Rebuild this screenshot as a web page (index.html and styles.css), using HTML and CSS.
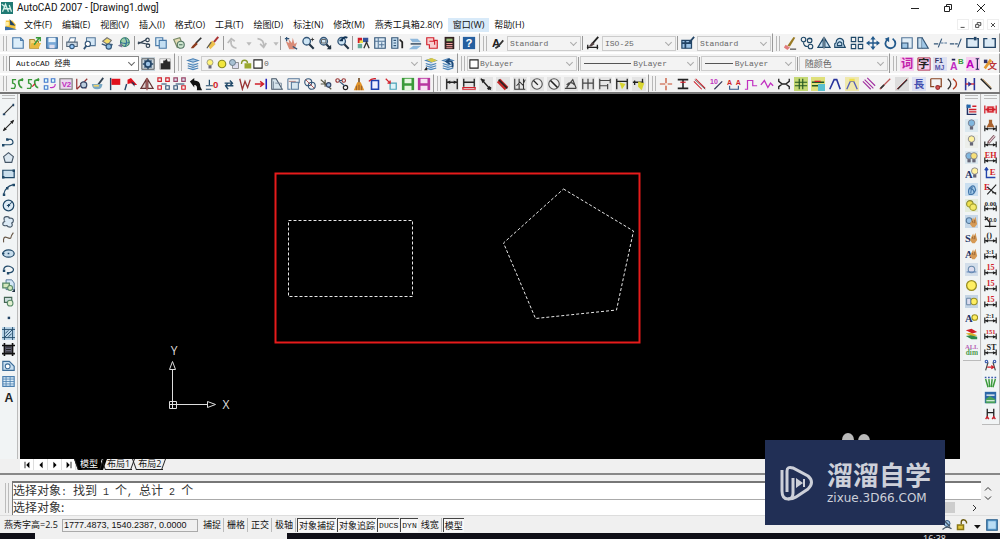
FILE: index.html
```html
<!DOCTYPE html>
<html lang="zh-CN">
<head>
<meta charset="utf-8">
<meta name="viewport" content="width=device-width, initial-scale=1">
<title>AutoCAD 2007 - [Drawing1.dwg]</title>
<link rel="stylesheet" href="styles.css">
</head>
<body>
<div class="app">
  <header class="titlebar">
    <span class="app-icon" data-icon="app"></span>
    <h1 class="title">AutoCAD 2007 - [Drawing1.dwg]</h1>
    <div class="window-buttons">
      <button type="button" aria-label="最小化"><svg viewBox="0 0 10 10"><path d="M1 5.500h8"/></svg></button>
      <button type="button" aria-label="还原"><svg viewBox="0 0 10 10"><path d="M1.500 3.500h5v5h-5zM3.500 3.500v-2h5v5h-2"/></svg></button>
      <button type="button" aria-label="关闭"><svg viewBox="0 0 10 10"><path d="M1 1l8 8M9 1l-8 8"/></svg></button>
    </div>
  </header>

  <nav class="menubar" aria-label="菜单">
    <span class="doc-icon" data-icon="doc"></span>
    <button type="button">文件(F)</button>
    <button type="button">编辑(E)</button>
    <button type="button">视图(V)</button>
    <button type="button">插入(I)</button>
    <button type="button">格式(O)</button>
    <button type="button">工具(T)</button>
    <button type="button">绘图(D)</button>
    <button type="button">标注(N)</button>
    <button type="button">修改(M)</button>
    <button type="button">燕秀工具箱2.8(Y)</button>
    <button type="button" class="hot">窗口(W)</button>
    <button type="button">帮助(H)</button>
    <div class="doc-buttons">
      <button type="button" aria-label="最小化图形"><svg viewBox="0 0 10 10"><path d="M2 8h5"/></svg></button>
      <button type="button" aria-label="还原图形"><svg viewBox="0 0 10 10"><path d="M2 4.500h4v3.500h-4zM4 4V2h4.500v3.500h-2"/></svg></button>
      <button type="button" aria-label="关闭图形"><svg viewBox="0 0 10 10"><path d="M2.500 2.500l5 5M7.500 2.500l-5 5"/></svg></button>
    </div>
  </nav>

  <div class="bar-row row-standard">
    <div class="toolbar" role="toolbar" aria-label="标准">
      <div class="tools" data-tools="new open save | print preview publish globe | cut copy paste brush matchprop | undo drop redo drop | pan zoomrt zoomwin zoomprev | props center palette sheet markup calc | help"></div>
    </div>
    <div class="toolbar" role="toolbar" aria-label="样式">
      <span class="style-icon" data-icon="textstyle"></span>
      <label class="combo dim"><select aria-label="文字样式"><option>Standard</option></select></label>
      <i class="sep"></i>
      <span class="style-icon" data-icon="dimstyle"></span>
      <label class="combo dim"><select aria-label="标注样式"><option>ISO-25</option></select></label>
      <i class="sep"></i>
      <span class="style-icon" data-icon="tablestyle"></span>
      <label class="combo dim"><select aria-label="表格样式"><option>Standard</option></select></label>
    </div>
    <div class="toolbar" role="toolbar" aria-label="修改">
      <div class="tools" data-tools="erase copyobj mirror offset array move rotate scale stretch trim extend breakpt break"></div>
    </div>
  </div>

  <div class="bar-row row-layers">
    <div class="toolbar" role="toolbar" aria-label="工作空间">
      <label class="combo workspace-combo"><select aria-label="工作空间"><option>AutoCAD 经典</option></select></label>
      <div class="tools tools-fixed" data-tools="gear workspace"></div>
    </div>
    <div class="toolbar" role="toolbar" aria-label="图层">
      <div class="tools tools-fixed" data-tools="layers"></div>
      <label class="combo dim layer-combo">
        <span class="combo-art"><b data-icon="bulb"></b><b data-icon="sun"></b><b data-icon="vpfreeze"></b><b data-icon="lock"></b><b data-icon="swatch"></b></span>
        <select aria-label="图层"><option>0</option></select>
      </label>
      <div class="tools tools-fixed" data-tools="layermake layerprev"></div>
    </div>
    <div class="toolbar" role="toolbar" aria-label="特性">
      <label class="combo dim color-combo"><span class="combo-art"><b data-icon="swatch"></b></span><select aria-label="颜色"><option>ByLayer</option></select></label>
      <i class="sep"></i>
      <label class="combo dim linetype-combo"><span class="combo-line"></span><select aria-label="线型"><option>ByLayer</option></select></label>
      <i class="sep"></i>
      <label class="combo dim weight-combo"><span class="combo-line"></span><select aria-label="线宽"><option>ByLayer</option></select></label>
      <i class="sep"></i>
      <label class="combo dim plot-combo"><select aria-label="打印样式"><option>随颜色</option></select></label>
    </div>
    <div class="toolbar" role="toolbar" aria-label="文字">
      <div class="tools" data-tools="word char textgrid textab textai textbrush"></div>
    </div>
  </div>

  <div class="bar-row row-yanxiu">
    <div class="toolbar" role="toolbar" aria-label="燕秀编辑">
      <div class="tools" data-tools="green1 green2 blocks v2 blockedit brushcup flag flag2 mirror2 arr1 arr2 boot zeroline swap wave arrowwall stretch2 blockcopy circles cross nodes broom rotrect scalerect disk diskp"></div>
    </div>
    <div class="toolbar shaded" role="toolbar" aria-label="燕秀标注">
      <div class="tools" data-tools="dimh dimred dimal dimald dimord radius diam dimang dimcont dimbase dimq dimqa"></div>
    </div>
    <div class="toolbar" role="toolbar" aria-label="燕秀工具">
      <div class="tools" data-tools="plus ibar slashes ten aa pulse zig xbar crossy crossb vee veey strands dashred diag long rectred arcs hbar backdiag"></div>
    </div>
  </div>

  <main class="workspace">
    <div class="side-tools draw-tools" role="toolbar" aria-label="绘图" data-tools="line xline pline polygon rect arc circle revcloud spline ellipse ellarc insblock mkblock point hatch gradient region table mtext"></div>
    <svg class="drawing" role="img" aria-label="图形区域">
      <g class="selected">
        <rect x="268.500" y="126.500" width="124" height="76"/>
        <path d="M543.500 95L613.500 137L596.500 216L515.500 224.500L483.500 149Z"/>
      </g>
      <rect class="mark" x="255.500" y="79.500" width="364" height="169"/>
      <path class="ucs" d="M149.500 307.500h7v7h-7zM149.500 310.500h38M152.500 314.500V275M149.500 275.500l3-8 3 8zM187.500 307.500v6l8-3z"/>
      <g class="ucs-text"><text x="154" y="261">Y</text><text x="206" y="315">X</text></g>
      <g class="mark-ears"><ellipse cx="828" cy="346" rx="6" ry="7"/><ellipse cx="844" cy="347" rx="6" ry="7"/></g>
    </svg>
    <aside class="docks">
      <div class="side-tools" role="toolbar" aria-label="图层工具" data-tools="lstat lbulb lbulby lbulb2 abulb lfreeze lyel lhand shand ahand lgray ycirc ycirc2 acirc stack alldim"></div>
      <div class="side-tools" role="toolbar" aria-label="标注工具" data-tools="d:red d:broom d:pen d:EH dle dex d:0.00 d:xo d:() d:3:1 d:15 d:15 d:15 d:2:1 d:151 d:ST darr dgrass dpic dend"></div>
    </aside>
  </main>

  <nav class="tabs" aria-label="布局">
    <button type="button" class="step" aria-label="第一个"><svg viewBox="0 0 10 10"><path d="M2 1v8h1V1zM8 1v8L4 5z"/></svg></button>
    <button type="button" class="step" aria-label="上一个"><svg viewBox="0 0 10 10"><path d="M7 1v8L3 5z"/></svg></button>
    <button type="button" class="step" aria-label="下一个"><svg viewBox="0 0 10 10"><path d="M3 1v8l4-4z"/></svg></button>
    <button type="button" class="step" aria-label="最后一个"><svg viewBox="0 0 10 10"><path d="M2 1v8l4-4zM7 1v8h1V1z"/></svg></button>
    <button type="button" class="tab active">模型</button>
    <button type="button" class="tab">布局1</button>
    <button type="button" class="tab">布局2</button>
  </nav>

  <section class="command" aria-label="命令行">
    <div class="command-box">
      <output class="history">选择对象<span>: </span>找到<span> 1 </span>个<span>, </span>总计<span> 2 </span>个</output>
      <div class="prompt-row">
        <input class="prompt" type="text" aria-label="命令" value="选择对象:">
        <div class="hscroll"><i></i><svg viewBox="0 0 8 8"><path d="M3 1l3 3-3 3"/></svg></div>
      </div>
    </div>
    <div class="vscroll"><svg viewBox="0 0 8 8"><path d="M1 5.500l3-3 3 3"/></svg><svg viewBox="0 0 8 8"><path d="M1 2.500l3 3 3-3"/></svg></div>
  </section>

  <footer class="status">
    <span class="height">燕秀字高=2.5</span>
    <span class="coords">1777.4873, 1540.2387, 0.0000</span>
    <button type="button">捕捉</button>
    <button type="button">栅格</button>
    <button type="button">正交</button>
    <button type="button">极轴</button>
    <button type="button" class="on">对象捕捉</button>
    <button type="button" class="on">对象追踪</button>
    <button type="button" class="on mono">DUCS</button>
    <button type="button" class="on mono">DYN</button>
    <button type="button">线宽</button>
    <button type="button" class="on">模型</button>
    <div class="tray"><span data-icon="comm"></span><span data-icon="padlock"></span><span data-icon="drop2"></span><span data-icon="clean"></span></div>
  </footer>
  <div class="taskbar"><span class="search"></span><span class="clock">16:38</span></div>

  <div class="watermark">
    <svg class="wm-logo" viewBox="0 0 34 36"><path d="M2 5v21q0 8 6 8 5 0 5-6V13"/><path d="M7 27V6q0-5 6-3l15 8q7 6 0 13l-12 8q-3 2-8 2"/><path class="solid" d="M16 13l7 5-7 5zM23 14h2v8h-2z"/></svg>
    <div class="wm-text"><strong>溜溜自学</strong><span>zixue.3D66.COM</span></div>
  </div>
</div>
<script src="icons.js"></script>
</body>
</html>
```

FILE: styles.css
```css
* { box-sizing: border-box; }

body {
  margin: 0;
  font: 9px/12px "Open Sans", "Noto Sans CJK SC", sans-serif;
  color: #111;
  background: #f0f0f0;
}

button, select, input {
  font: inherit;
  color: inherit;
  margin: 0;
  padding: 0;
  border: 0;
  background: none;
}

svg { display: block; }

.app {
  position: relative;
  display: flex;
  flex-direction: column;
  min-height: 100vh;
  overflow: hidden;
}

.titlebar, .menubar {
  display: flex;
  align-items: center;
  background: #fff;
}

.titlebar { height: 16px; padding-left: 1px; gap: 4px; }
.app-icon { width: 12px; height: 12px; }
.title { margin: 0; font: 400 10px/16px Roboto, sans-serif; }
.window-buttons { display: flex; gap: 23px; margin-left: auto; padding-right: 14px; }
.window-buttons svg { width: 10px; height: 10px; }
.window-buttons path, .doc-buttons path { fill: none; stroke: #222; }

.menubar { height: 17px; padding-left: 5px; }
.doc-icon { width: 12px; height: 12px; margin-right: 2px; }
.menubar > button { height: 14px; padding: 0 5px; white-space: nowrap; }
.menubar .hot { background: #d8eaf9; }
.doc-buttons { display: flex; gap: 3px; margin-left: auto; padding-right: 1px; }
.doc-buttons button { width: 12px; height: 11px; padding: 1px; border: 1px solid #eee; }
.doc-buttons svg { width: 8px; height: 8px; }

.bar-row {
  display: grid;
  height: 20px;
  background: #f0f0f0;
  border-bottom: 1px solid #fff;
}
.row-standard { grid-template-columns: 480fr 293fr 227fr; }
.row-layers { grid-template-columns: 175fr 283fr 432fr 110fr; height: 21px; }
.row-yanxiu { grid-template-columns: 434fr 215fr 351fr; border-bottom: 2px solid #777; }

.toolbar {
  display: flex;
  align-items: center;
  min-width: 0;
  padding: 0 1px 0 9px;
  border-right: 1px solid #999;
  border-top: 1px solid #fff;
  background: linear-gradient(#b8b8b8, #b8b8b8) 3px 50% / 1px 15px no-repeat, linear-gradient(#b8b8b8, #b8b8b8) 6px 50% / 1px 15px no-repeat, #f3f3f3;
}
.row-yanxiu .toolbar:last-child { padding-right: 4px; }
.tools { display: flex; flex: 1; min-width: 0; align-items: center; }
.tools-fixed { flex: none; }
.tool { display: grid; place-items: center; flex: 1 1 17px; min-width: 0; height: 17px; }
.tools-fixed .tool { flex: none; width: 17px; }
.tool svg { width: 14px; height: 14px; }
.shaded .tool svg { background: #e4e4e4; }
.tool-drop { flex: 0 0 10px; }
.sep { flex: none; width: 1px; height: 14px; margin: 0 1px; background: #999; }
.style-icon { flex: none; width: 14px; height: 14px; margin: 0 2px; }
[data-icon] svg { width: 100%; height: 100%; }

.combo {
  position: relative;
  display: flex;
  flex: 1 1 70px;
  min-width: 0;
  height: 15px;
  align-items: center;
  background: #fff;
  border: 1px solid #888;
}
.combo.dim { color: #666; background: #f3f3f3; border-color: #ccc; }
.combo::after {
  content: "";
  position: absolute;
  right: 4px;
  top: 3px;
  width: 4px;
  height: 4px;
  border: solid #666;
  border-width: 0 1px 1px 0;
  transform: rotate(45deg);
}
.combo.dim::after { border-color: #aaa; }
.combo select {
  appearance: none;
  flex: 1;
  min-width: 0;
  height: 13px;
  padding: 0 12px 0 2px;
  font: 8px/13px "Liberation Mono", "Noto Sans CJK SC", monospace;
}
.workspace-combo select { padding-left: 6px; }
.combo-art { display: flex; flex: none; padding-left: 2px; }
.combo-art b { width: 12px; height: 12px; }
.color-combo .combo-art { padding-left: 0; }
.layer-combo select, .color-combo select { padding-left: 0; }
.combo-line { flex: 1; height: 1px; margin-left: 3px; background: #555; }
.color-combo { flex: 109 1 0; }
.linetype-combo { flex: 117 1 0; }
.weight-combo { flex: 93 1 0; }
.plot-combo { flex: 88 1 0; }
.linetype-combo select { flex: none; width: 66px; }
.weight-combo select { flex: none; width: 62px; }
.plot-combo select { padding-left: 5px; font: 9px/13px "Noto Sans CJK SC", sans-serif; }

.workspace { display: flex; flex: 1; background: #f0f0f0; }
.side-tools {
  display: flex;
  flex-direction: column;
  align-items: center;
  width: 18px;
  padding: 7px 0 3px;
  background: linear-gradient(#bbb, #bbb) 50% 1px / 13px 1px no-repeat, linear-gradient(#bbb, #bbb) 50% 4px / 13px 1px no-repeat, #f1f4f5;
  border-right: 1px solid #bbb;
  border-bottom: 1px solid #bbb;
}
.side-tools .tool { flex: none; width: 16px; height: 16px; }
.side-tools .tool svg { width: 13px; height: 13px; }
.draw-tools { border-bottom: 0; }
.drawing { flex: 1; min-width: 0; height: auto; min-height: 320px; margin-left: 2px; background: #000; }
.selected { fill: none; stroke: #e8e8e8; stroke-dasharray: 3 2; }
.mark { fill: none; stroke: #e61b1b; stroke-width: 2; }
.ucs { fill: none; stroke: #ddd; }
.ucs-text { font: 12px "Open Sans", sans-serif; fill: #ddd; text-anchor: middle; }
.mark-ears { fill: #b9b9b9; }
.docks { display: flex; gap: 1px; align-items: flex-start; padding: 0 0 0 3px; }

.tabs {
  display: flex;
  align-items: center;
  height: 16px;
  padding: 0 0 3px 20px;
  border-bottom: 2px solid #888;
}
.step { width: 14px; height: 11px; padding: 2px 3px; background: #fff; border-right: 1px solid #ddd; }
.step svg { width: 8px; height: 8px; }
.tab { position: relative; height: 11px; padding: 0 2px; margin-left: 4px; line-height: 10px; border-bottom: 1px solid #222; }
.tab.active { margin-left: 2px; padding: 0 3px 0 2px; color: #fff; background: #000; }
.tab::before, .tab::after {
  content: "";
  position: absolute;
  top: 0;
  width: 3px;
  height: 11px;
  border-left: 1px solid #222;
}
.tab::before { left: -2px; transform: skewX(20deg); }
.tab::after { right: -4px; transform: skewX(-20deg); }
.tab.active::before, .tab.active::after { background: #000; }

.command {
  display: flex;
  height: 39px;
  margin-top: 2px;
  padding: 4px 0 0 12px;
  background: linear-gradient(#bbb, #bbb) 5px 6px / 1px 30px no-repeat, linear-gradient(#bbb, #bbb) 8px 6px / 1px 30px no-repeat, #f0f0f0;
  border-bottom: 1px solid #ddd;
}
.command-box { flex: 1; min-width: 0; background: #fff; border-top: 2px solid #777; border-left: 1px solid #777; }
.history, .prompt { display: block; font: 12px/14px "Noto Sans CJK SC", sans-serif; color: #333; }
.history { height: 17px; border-bottom: 1px solid #aaa; }
.history span { font: 10px/14px "Liberation Mono", monospace; white-space: pre; }
.prompt-row { display: flex; }
.prompt { flex: 1; min-width: 0; height: 14px; }
.hscroll { display: flex; align-items: center; justify-content: space-between; width: 20%; height: 15px; padding-right: 3px; background: #f0f0f0; }
.hscroll i { width: 88%; height: 11px; background: #cdcdcd; }
.hscroll svg, .vscroll svg { width: 8px; height: 8px; fill: none; stroke: #333; }
.vscroll { display: flex; flex-direction: column; gap: 1px; align-items: center; width: 19px; padding: 4px 5px 0 0; }

.status { display: flex; align-items: center; height: 17px; padding: 1px 2px 0 4px; white-space: nowrap; }
.height { width: 58px; }
.coords { width: 136px; height: 13px; margin-right: 3px; padding-left: 1px; font: 9px/11px "Liberation Sans", sans-serif; border: 1px solid #aaa; }
.status button { height: 14px; padding: 0 2px; border-right: 1px solid #bbb; margin-right: 1px; }
.status .on { padding: 0 1px; border: solid #444; border-width: 1px 0 0 1px; background: #f8f8f8; }
.status .mono { font: 8px/12px "Liberation Mono", monospace; }
.tray { display: flex; align-items: center; gap: 3px; margin-left: auto; }
.tray span { width: 12px; height: 12px; }

.taskbar { display: flex; justify-content: space-between; height: 6px; padding: 0 54px 0 35px; overflow: hidden; background: #101018; }
.search { width: 252px; background: #f0f0f0; }
.clock { font-size: 9px; line-height: 12px; color: #eee; }

.watermark {
  position: absolute;
  right: 55px;
  bottom: 14px;
  display: flex;
  align-items: center;
  gap: 13px;
  width: 180px;
  height: 85px;
  padding-left: 15px;
  color: #cdd0d9;
  background: #212f55;
}
.wm-logo { width: 34px; height: 36px; fill: none; stroke: #cdd0d9; stroke-width: 3; }
.wm-logo .solid { fill: #cdd0d9; stroke: none; }
.wm-text { display: flex; flex-direction: column; padding-bottom: 4px; }
.wm-text strong { font: 700 26px/34px "Noto Sans CJK SC", sans-serif; }
.wm-text span { font: 12px/14px "DejaVu Sans", sans-serif; }
```

FILE: icons.js
```javascript
const p = (d, c = '#234', w = 1.3, f = 'none') => `<path d="${d}" stroke="${c}" stroke-width="${w}" fill="${f}"/>`;
const f = (d, c = '#234') => `<path d="${d}" fill="${c}"/>`;
const o = (x, y, r, c = '#234', fill = 'none', w = 1.3) => `<circle cx="${x}" cy="${y}" r="${r}" stroke="${c}" stroke-width="${w}" fill="${fill}"/>`;
const t = (s, x, y, size, c = '#222', face = 'Liberation Sans') => `<text x="${x}" y="${y}" font-size="${size}" font-weight="700" font-family="${face}, Noto Sans CJK SC" fill="${c}">${s}</text>`;
const bg = c => f('M0 0h16v16H0z', c);
const serif = 'Liberation Serif';

const navy = '#1f4868', red = '#d11f2a', green = '#3a9a3a', mag = '#c12fc1', yel = '#efe04a';
const bulb = (x, y, c) => o(x, y, 4, '#778', c, 1) + f(`M${x - 2} ${y + 4}h4v4h-4z`, '#667');
const mag1 = o(6.5, 6, 4.300, '#357', '#cfe6f5', 1.5) + p('M9.500 9.500l5 5', '#234', 2.4);
const sheets = p('M2 4l6-2 6 2-6 2zM2 7.500l6 2 6-2M2 10l6 2 6-2M2 12.500l6 2 6-2', '#4a80b4', 1.2, '#a9cbe8');
const square = (x, y, c = navy, fill = 'none', s = 5) => p(`M${x} ${y}h${s}v${s}h-${s}z`, c, 1.3, fill);
const dimBase = (c = '#222') => p('M1 8v7M15 8v7M1 12h14', c, 1.5) + f('M1 12l4-2v4zM15 12l-4-2v4z', c);
const hand = f('M8 7l2-4 1 3 2-4 1 5 1 4-3 4H9l-3-4z', '#d69a55') + p('M9 7l1 3M12 6v4', '#8a5a2c', 1);

const icons = {
  app: f('M0 0h16v16H0z', '#207a74') + p('M2 13L6 3l4 10M3 9h10M11 4l3 9M1 3l5 4', '#d8f1ea', 1.7),
  doc: f('M1 2h9l4 5v7H1z', '#f5c43c') + f('M6 0l8 9-7-1z', '#246') + f('M0 10l6 1 10 3-16 1z', '#3b6ea8') + f('M1 4h4v5H1z', '#fff0a8'),
  new: p('M2 2h9l3 3v9H2z', '#4a7aa8', 1.3, '#dceefa') + p('M11 2v3h3', '#4a7aa8'),
  open: p('M2 4h5l1 2h4v8H2z', '#a98532', 1.2, '#f4d77a') + f('M4 8h11l-3 6H2z', '#e8b93e') + p('M7 10l6-8M9 2h5v4', green, 1.6),
  save: p('M2 2h12v12H2z', '#2d5f93', 1.3, '#79a9d8') + f('M4 2h8v5H4z', '#e9f3fb') + f('M5 10h6v4H5z', '#dde'),
  print: p('M4 7l2-5h6l-1 5', '#579', 1.2, '#fff') + p('M2 7h12v5H2z', '#567', 1.2, '#cdd9e4') + o(8, 12, 2.5, '#357', '#9cf'),
  preview: p('M4 2h10v9H4z', '#579', 1.2, '#d4e7f6') + o(5.500, 9, 3, '#357', '#fff') + p('M4 11l-3 4', '#357', 2),
  publish: p('M3 6l5-4 5 3-4 5z', '#777', 1.2, '#f3dc6b') + p('M2 9l10 4 2-4', '#357', 1.6) + o(10, 12, 3, '#357', '#8bbbe0'),
  globe: o(9, 7, 5, '#2c7864', '#9fd0a8') + p('M4 7q5 3 10 0M9 2q4 5 0 10', '#35739a') + f('M1 11l5-3v5z', '#779'),
  cut: p('M1 7l14 3M1 9l10-5', '#345', 1.4) + o(12.500, 11, 2, '#345') + o(12, 4.500, 2, '#345'),
  copy: p('M2 2h8v9H2z', '#4a7aa8', 1.3, '#dceefa') + p('M6 5h8v9H6z', '#4a7aa8', 1.3, '#c3def2'),
  paste: p('M2 4l7-2 3 8-6 3z', '#786', 1.3, '#e4dcb4') + o(10, 10, 4, '#576', '#cfe6cf') + p('M8 10h4', '#576'),
  brush: p('M14 2L8 8', '#333', 2) + f('M8 7l2 2-5 5-3 0 2-3z', '#8c3b1d'),
  matchprop: p('M14 1L9 7', '#a33', 2.3) + f('M7 5l4 4-6 6-3-4z', '#edc14c') + p('M1 14l5-7', '#555', 1.4),
  undo: p('M12 14Q4 12 6 5M2 8l4-5 4 3', '#bbb', 2),
  redo: p('M4 3q8 1 7 9M7 9l4 4 3-5', '#bbb', 2),
  drop: f('M5 7h6l-3 4z', '#bbb'),
  pan: f('M2 6l4 2-1-5 4 5 1-6 2 7 3-2-3 8H6z', '#d98b77') + p('M1 3h5M3 1v5M10 12l5 3', '#357', 1.5),
  zoomrt: mag1 + p('M11 4h4M13 2v4', '#333', 1),
  zoomwin: mag1 + p('M4 4h5v4H4z', '#555', 1) + f('M15 10v5h-5z'),
  zoomprev: mag1 + p('M13 2Q9 0 6 5M4 5h4', '#135', 2),
  props: f('M2 2h5v6H2z', red) + f('M8 2h6v5H8z', '#35529a') + f('M2 9h5v5H2z', '#6a9') + p('M9 14l3-7 3 7', '#333', 1.5) + f('M4 5h4v3H4z', yel),
  center: p('M2 2h12v12H2z', '#357', 1.3, '#dceaf5') + p('M2 6h12M6 2v12M10 7v6M7 10h6', '#579', 1.2),
  palette: p('M2 2h7v12H2z', '#357', 1.3, '#c8e0f2') + p('M4 5h3M4 8h3M4 11h3', '#357') + p('M11 4l3 3v7', '#222', 2),
  sheet: f('M2 3h9l4 4H5z', '#8eb8dc') + f('M3 8h12v2H3z', '#567') + f('M6 11h9l-5 4H1z', '#8eb8dc'),
  markup: p('M2 2h8v3h4v9H5v-4H2z', red, 1.3, '#f8cfd0') + p('M5 6h6v4', red),
  calc: f('M3 1h11v14H3z', '#322') + f('M5 3h7v3H5z', '#9bc27a') + p('M5 8.500h7M5 11h7M5 13.500h7', '#e99', 1.2),
  help: f('M1 1h14v14H1z', '#255fa0') + t('?', 4, 13, 13, '#fff'),
  textstyle: t('A', 1, 12, 13) + p('M14 5l-6 7-3 2', '#333', 2),
  dimstyle: p('M1 13h13M2 10v5M13 10v5', '#222', 1.5) + p('M14 1L7 9', '#222', 2) + f('M7 7l3 2-4 3-3 0z', '#544'),
  tablestyle: p('M1 5h11v9H1z', '#246', 1.4, '#9cc3e6') + p('M1 8h11M5 5v9M15 1L9 8', '#246', 2),
  erase: f('M5 11l7-10 2 1-6 10z', '#997a24') + f('M3 10l5 3-3 3-4-3z', '#e17b7b') + p('M8 15h7', '#333', 1.2),
  copyobj: o(4, 4, 2.600, navy) + o(11, 5, 2.600, navy) + o(12, 12, 2.600, navy) + p('M4 7q0 5 5 5M9 3h4', navy),
  mirror: p('M7 3v10H1zM9 3v10h6z', navy, 1.3, '#c8dff0') + p('M8 1v14', '#678', 1),
  offset: p('M2 13V9q2-1 2-4 3-4 7-1 2 2 1 5l2 4zM5 11V9q2-4 5-1v3z', navy, 1.3, '#c8dff0'),
  array: square(1.500, 1.500) + square(9.500, 1.500) + square(1.500, 9.500) + square(9.500, 9.500),
  move: p('M8 2v12M2 8h12', '#235a8c', 1.6) + f('M8 0l3 4H5zM8 16l3-4H5zM0 8l4-3v6zM16 8l-4-3v6z', '#235a8c'),
  rotate: p('M5 4Q1 8 4 12q5 4 9 0 3-5-2-9', '#235a8c', 2) + f('M7 1v6L2 3z', '#235a8c'),
  scale: p('M2 2h12v12H2z', '#579', 1.3, '#e2eef7') + p('M2 8h7v6H2z', '#357', 1.3, '#9fc7e6'),
  stretch: p('M2 2h5v12H2z', '#357', 1.3, '#c8dff0') + p('M7 2l7 12H7', '#357', 1.3, '#9fc7e6'),
  trim: p('M1 9h5M6 13l4-10', '#357', 1.3) + p('M9 8h3M13 8h3', '#579', 1.3),
  extend: p('M1 9h5M7 9h3M10 13l4-10', '#357', 1.3),
  breakpt: p('M9 3H1v10h13V3h-2', '#246', 1.6, '#dceaf5') + f('M9 1h3v4H9z', '#246'),
  break: p('M5 3H1v10h13V3h-4', '#246', 1.6, '#dceaf5'),
  gear: bg('#c8d4dc') + p('M1 2h14v12H1z', '#555', 1) + o(8, 8, 3.500, '#246', '#9cc3e6', 2) + p('M8 2v2M8 12v2M2 8h2M12 8h2M4 4l1 1M11 11l1 1M12 4l-1 1M4 12l1-1', '#246', 1.6),
  workspace: p('M2 2h12v12H2z', '#aaa', 1) + f('M3 7h3V4h2l2-2 1 3h3v9H3z', '#2a2a2a'),
  layers: sheets,
  bulb: o(8, 6, 4, '#887', '#fff37a', 1) + f('M6 10h4v4H6z', '#667'),
  sun: o(8, 8, 5, '#8a8a20', '#f2e63c', 1.6),
  vpfreeze: p('M6 6h8v8H6z', '#777', 1, '#dde') + o(6, 6, 4, '#678', '#a8c0d2'),
  lock: p('M2 8Q2 3 6 3t4 4', '#8a9a2e', 1.8) + f('M6 7h9v7H6z', '#9aa82e'),
  swatch: p('M2.500 2.500h11v11h-11z', '#222', 1.4, '#fff'),
  layermake: sheets + f('M3 3l6-2 6 3-6 2z', '#d8c945') + f('M0 15l3-4 1 4z', '#222'),
  layerprev: sheets + p('M13 12q2-9-6-7M10 2L6 5l4 3', '#1d4a7a', 2),
  word: bg('#f7cff0') + t('词', 1, 13, 14, '#c020a8'),
  char: p('M1 1h14v14H1z', '#a24', 1, '#f7cff0') + t('字', 1, 13, 13, '#222'),
  textgrid: bg('#dde0f2') + t('F1', 2, 7, 8, '#336') + t('MJ', 2, 15, 8, '#55a'),
  textab: t('A', 0, 15, 12, mag) + t('B', 9, 8, 9, green) + p('M2 3h4', '#225', 2),
  textai: bg('#f7cff0') + t('A', 0, 13, 13, '#b0b') + p('M13 2v12M11 2h4M11 14h4', '#225', 1.3),
  textbrush: t('文', 5, 14, 11, '#b33') + p('M2 13L9 3', '#e39a32', 3) + f('M1 3h4v4H1z', '#336'),
  green1: p('M7 3H3v4q5 1 2 6H1', green, 1.6) + p('M15 4q-6-2-5 3t4 5M11 4l4-2', green, 2),
  green2: p('M7 3H3v4q5 1 2 6H1', green, 1.6) + p('M15 4q-6-2-5 3t4 5M11 4l4-2', green, 2) + p('M7 11l3-3', red, 1.3),
  blocks: square(1.500, 2, '#47c', '#dff', 4) + square(9.500, 2, '#47c', '#dff', 4) + square(1.500, 10, '#47c', '#dff', 4) + p('M8 12q6 1 6-4', mag, 1.3),
  v2: p('M1 2h14v12H1z', '#777', 1.3, '#ead8ee') + t('V2', 3, 11, 9, mag),
  blockedit: p('M2 2v12M2 14L14 2M6 7l7 6', '#933', 1.4) + o(10, 9, 3.500, '#346', '#bcd'),
  brushcup: p('M14 1L8 9', '#345', 2) + f('M1 8h12q0 6-6 6T1 8z', '#7aa8c4') + f('M3 9h6v2H3z', '#efd36a'),
  flag: p('M3 1v14', '#246', 1.6) + f('M4 2h10v7H4z', '#e0101c'),
  flag2: p('M3 8l-2 7', '#246', 1.6) + f('M4 3l4-2 7 8-4 0-3-2-4 1z', '#e0101c') + f('M8 5l4 2v4z', '#235'),
  mirror2: p('M7 3v10H1z', '#633', 1.3, '#dcc') + p('M9 3v10h6z', '#633', 1.3) + p('M8 1v14', '#944'),
  arr1: square(1, 1, red, 'none', 4) + square(10, 1, red, 'none', 4) + square(1, 10, red, 'none', 4) + square(10, 10, '#357', 'none', 4) + p('M5 8h6', '#357'),
  arr2: square(1, 1, '#946', '#dde', 4) + square(10, 1, '#946', '#dde', 4) + square(1, 10, '#357', 'none', 4) + square(10, 10, red, 'none', 4) + p('M3 8h10', '#357'),
  boot: f('M1 5l5-4v3q7 0 7 7l2 4H9q1-6-3-6v3z', '#111'),
  zeroline: p('M5 3v6M1 10h8M1 14h6', navy, 1.4) + t('0', 9, 13, 11, red),
  swap: p('M3 7h8M9 4l3 3-3 3M13 10H5M7 7l-3 3 3 4', navy, 1.5),
  wave: p('M2 2l3 12 3-9 3 7 3-9', '#933', 1.5),
  arrowwall: p('M1 8h9M7 5l4 3-4 3', red, 1.6) + p('M14 2v12', '#22b', 1.8),
  stretch2: p('M2 2h5l7 12H2z', '#456', 1.2, '#d6e4ec') + p('M4 5v9M6 7h7v6', '#789', 1),
  blockcopy: p('M1 2h13v5M1 2v12h3', '#579', 1.2) + p('M5 6h8v8H5z', '#579', 1.2, '#d7e6ef') + p('M2 5h8', '#a77', 1),
  circles: o(6, 6, 4, '#357') + o(10, 10, 4, '#357') + p('M3 3l10 10', '#a44', 1),
  cross: p('M2 3l12 11M2 8h8M7 3v8', '#554', 1.4) + o(11, 9, 2.500, '#346', '#9bd'),
  nodes: o(3, 4, 2, '#933') + o(10, 4, 2, '#933') + o(12, 12, 2.500, '#222') + p('M5 5l6 5M5 4h3', '#357'),
  broom: p('M8 1v6', '#753', 2) + f('M6 6h4l4 9H2z', '#e29427') + p('M5 10v5M8 9v6M11 10v5', '#853', 1),
  rotrect: p('M4 4h8v10H4z', '#1d3eb0', 1.8, '#eef') + p('M1 5q3-4 8-3', red, 1.5),
  scalerect: p('M7 7h7v7H7z', '#4aa3b8', 1.4, '#dff4f8') + p('M2 2l5 5M7 4v3H4', red, 1.4),
  disk: f('M1 1h14v14H1z', green) + f('M4 2h8v5H4zM4 10h8v5H4z', '#e5f5e0'),
  diskp: f('M1 1h14v14H1z', '#b8369f') + f('M4 2h8v5H4zM4 10h8v5H4z', '#f7e0f2'),
  dimh: p('M2 2v12M14 2v12M2 6h12', '#222', 1.5) + f('M2 6l4-2v4zM14 6l-4-2v4z', '#222'),
  dimred: p('M2 2v9M14 2v9M2 6h12', '#222', 1.5) + p('M1 12h14v2H1z', red, 1.4),
  dimal: p('M2 2l4 3M10 14l4-2M4 4l8 9', '#222', 1.7) + f('M2 2l5 1-3 4zM14 15l-5-2 3-3z', '#222'),
  dimald: f('M1 6l4-4 9 9-4 4z', '#c42a2a') + p('M3 3l10 10', '#222', 1.7),
  dimord: p('M2 2v12h12M4 10l4-4 3 3 3-6M7 2v12M12 2v12', '#333', 1.2),
  radius: o(8, 8, 6, '#555', '#eee') + p('M4 4l5 5', '#222', 1.6),
  diam: o(8, 8, 6, '#555', '#eee') + p('M4 4l8 8', '#222', 1.8),
  dimang: p('M1 13h13M3 12l7-9 4 10M3 9q5-5 9 0', '#444', 1.4),
  dimcont: p('M2 2v12M8 2v12M14 2v12M2 7h12', '#444', 1.4),
  dimbase: p('M2 2v12M14 2v5M11 8v6M2 4h12M2 10h9', '#444', 1.4),
  dimq: p('M2 2v12M14 2v12M2 5h12', '#222', 1.5) + f('M5 6l7 2-4 6z', '#d8d531'),
  dimqa: p('M1 6h12M12 2v6M3 4v5', '#222', 1.5) + f('M7 5l7 2-3 8-4-4z', '#d8d531'),
  plus: p('M8 1v14M1 8h14', '#c64a2a', 1.4) + f('M7 7h3v3H7z', '#f7ece2'),
  ibar: p('M2 3h12M2 13h12M8 3v10', '#222', 1.8) + p('M5 6h6', red, 1.4),
  slashes: p('M3 2l11 11M1 5l9 9', red, 1.2) + p('M2 3l12 11', '#333', .8),
  ten: t('10', 0, 8, 8, mag) + p('M5 14L14 5', '#335', 1.3),
  aa: t('A', 0, 9, 8, red) + t('A', 10, 9, 8, red) + p('M3 10v4h10v-4', '#358', 1.3),
  pulse: p('M1 14h3V4h6v6h5', mag, 1.4),
  zig: p('M1 9l4-5 4 8 3-5 3 3', mag, 1.5),
  xbar: p('M2 2v3l4 3h4l4-3V2M2 14v-3l4-3h4l4 3v3', '#222', 1.5),
  crossy: bg('#c4d873') + p('M1 6h14M1 10h14M6 2v12M10 2v12', '#252', 1.3),
  crossb: bg('#dfe07a') + p('M1 6h14M1 10h14', '#252', 1.5) + f('M8 8h8v8H8z', '#5abfd0') + p('M4 5h7', red, 1.5),
  vee: p('M2 14L7 3h3l4 11', '#28339c', 1.8),
  veey: bg('#efe8ac') + p('M2 14L6 5h4l4 9', '#5560ba', 1.5) + f('M5 2h6v3H5z', yel),
  strands: p('M1 5l9 9M3 3l10 10M6 1l9 9', '#a12fa0', 1.3),
  dashred: p('M2 14L14 2', '#b55', 1.4) + p('M3 13l4-4', '#333', 1.8),
  diag: bg('#ddd') + p('M2 14L14 2', red, 1) + p('M3 14L14 3', '#333', 1.5),
  long: bg('#dde0f2') + t('長', 2, 13, 12, '#4450b0'),
  rectred: p('M2 2h12v9H9M2 2v9h4', '#842', 1.4) + o(10, 12, 2.200, '#933', '#d55'),
  arcs: p('M2 2q7 6 0 12', '#333', 1.5) + p('M8 2q8 6 0 12', '#b43b20', 1.5),
  hbar: p('M3 1v14M13 1v14', '#28339c', 1.8) + p('M3 8h10', red, 1.5) + f('M6 5v6l4-3z', '#28339c'),
  backdiag: p('M2 2l12 12', '#222', 1.8) + p('M4 2l10 10', '#b84', 1),
  line: p('M2 14L14 2', '#333', 1.4) + f('M1 13h3v2H1zM13 1h2v3h-2z', '#246'),
  xline: p('M2 14L14 2', '#222', 1.4) + f('M1 15l2-5 3 3zM15 1l-5 2 3 3z', '#222'),
  pline: p('M1 12h9q5-1 3-5-2-3-6-1', navy, 1.5) + f('M0 11h3v3H0zM5 4h3v3H5z', navy),
  polygon: p('M8 2l6 5-2 7H4L2 7z', '#456', 1.4, '#dbe7f0'),
  rect: p('M1 4h14v9H1z', navy, 1.5, '#cadfed') + f('M0 11h3v3H0zM13 3h3v3h-3z', navy),
  arc: p('M2 14Q4 4 14 2', navy, 1.4) + f('M1 13h3v3H1zM13 1h3v3h-3zM5 5h3v3H5z', navy),
  circle: o(8, 8, 6.500, navy, '#dceaf5', 1.5) + p('M8 8l4-4M6 8h4M8 6v4', navy),
  revcloud: p('M3 7Q1 2 6 2q3 0 3 2 5-1 5 3 0 2-2 3 2 4-2 5-3 0-4-2-5 1-5-2 0-3 3-3', '#456', 1.4, '#dceaf5'),
  spline: p('M2 14Q1 6 6 8t5 0 3-6', '#654', 1.4),
  ellipse: `<ellipse cx="8" cy="8" rx="7" ry="4.500" fill="#c7ddec" stroke="${navy}" stroke-width="1.500"/>` + f('M7 7h2v2H7zM0 7h3v2H0z', navy),
  ellarc: p('M2 8q1-5 7-4 6 2 5 5-1 3-6 3', navy, 1.5) + f('M1 8h3v3H1zM6 11h3v3H6z', navy),
  insblock: p('M5 1h7l3 4v8H5z', '#579', 1.2, '#d4e7f6') + p('M1 5h8v6H1z', '#586', 1.6, '#d5e7bd') + o(10, 11, 3, '#586', '#d5e7bd') + f('M16 12v4h-4z'),
  mkblock: p('M3 3h9v6H3z', '#465', 1.4, '#cdd') + o(10, 10, 3.500, '#586', '#e0eed0'),
  point: f('M7 7h3v3H7z', '#246'),
  hatch: bg('#b9d4e8') + p('M3 0v16M13 0v16M0 3h16M0 13h16M3 13L13 3M4 8l4-4M8 12l4-4', navy, 1.1),
  gradient: f('M3 3h10v10H3z', '#667') + p('M3 0v16M13 0v16M0 3h16M0 13h16', '#111', 2) + p('M5 5h6M5 8h6M5 11h6', '#222'),
  region: p('M1 3h8l6 6v5H1z', '#3b6c98', 1.4, '#c8dff0') + o(7, 9, 3, '#3b6c98', '#fff'),
  table: p('M1 2h14v12H1z', '#4b80b0', 1.4, '#dcecf8') + p('M1 5h14M1 8h14M1 11h14M5 2v12M10 2v12', '#4b80b0', 1),
  mtext: t('A', 3, 14, 15, '#222'),
  lstat: p('M3 2v12h11', '#236', 1.8) + f('M2 2h5v4H2z', '#26a') + p('M5 11h9M5 8h9M9 4h5', red, 1.6),
  lbulb: bg('#dbe8ef') + bulb(8, 5, '#7fb6de'),
  lbulby: bg('#eceeea') + bulb(8, 5, '#fff2a0'),
  lbulb2: bg('#dbe8ef') + bulb(5, 6, '#7fb6de') + bulb(11, 6, '#f6e07a'),
  abulb: t('A', 0, 14, 13, '#236', serif) + bulb(12, 5, '#fff2a0'),
  lfreeze: bg('#cbdff0') + p('M5 14Q3 8 7 5q3-3 5 0t0 6q-2 4-7 3zM6 7q5 0 5 5M9 5q-2 4-2 8', '#47a', 1.4, '#a8cdea'),
  lyel: bg('#e4ecdc') + o(6, 6, 4, '#883', '#efe04a') + o(10, 10, 4, '#a6a230', '#f3e96a'),
  lhand: bg('#c7d8e8') + o(5, 7, 3.500, '#579', '#9cc3e6') + hand,
  shand: t('S', 0, 14, 13, '#236', serif) + hand,
  ahand: t('A', 0, 14, 13, '#236', serif) + hand,
  lgray: bg('#d3deea') + o(8, 8, 4, '#68a', '#dde') + p('M2 11h12', '#68b', 1.3),
  ycirc: o(8, 8, 6, '#9a8f22', '#ffef62', 1.6),
  ycirc2: bg('#c4d4e4') + o(11, 8, 4, '#9a8f22', '#ffef62') + p('M2 4h5v8H2z', '#579', 1, '#dde'),
  acirc: t('A', 0, 14, 13, '#236', serif) + o(12, 8, 3.500, '#9a8f22', '#ffef62'),
  stack: f('M1 4l7-2 7 4-6 2z', red) + f('M1 8l6-1 8 3-6 2z', '#d8b02c') + f('M1 11l6-1 8 2v3H8z', '#2e8a4c'),
  alldim: t('ALL', 0, 7, 8, '#b565b5', serif) + t('dim', 1, 15, 9, '#4c9c4c', serif),
  dle: p('M3 2v11h11M1 4l2-3 2 3', '#24a', 1.7) + t('E', 7, 10, 11, red, serif),
  dex: t('E', 0, 9, 11, red, serif) + p('M4 14L15 2M4 5l11 9M10 12h5', '#222', 1.4),
  darr: p('M2 14L5 4M14 14L11 4', '#444', 1.4) + p('M4 10h8M9 8l3 2-3 2', red, 1.4) + o(3, 3, 1.500, '#35a') + o(13, 3, 1.500, '#35a'),
  dgrass: p('M5 15L2 5M7 15L6 5M9 15l1-10M11 15l3-10', green, 1.8) + p('M1 3h2M5 3h2M9 3h2M13 3h2', '#35a', 2),
  dpic: f('M1 1h14v14H1z', '#2b67a8') + f('M2 10l5-4 7 4v5H2z', '#47a15a') + p('M3 5h10M3 12h10', '#fff', 1.5),
  dend: p('M4 2v12M12 2v12M4 7h8', '#222', 1.6) + p('M2 15l2-3 2 3M10 15l2-3 2 3', red, 1.6),
  comm: o(8, 6, 4, '#357', '#9cc3e6') + p('M2 14q6-6 12-1M4 2l8 8', '#456', 1.6),
  padlock: p('M7 7V4q0-3 3-3t4 3v2', '#6b5a10', 1.8) + f('M1 7h10v8H1z', '#8a7716') + f('M3 9h6v4H3z', '#e1c63e'),
  drop2: f('M4 8h9l-4.500 5z', '#111'),
  clean: p('M1 1h14v14H1z', '#245a88', 1.5, '#5fa0d0') + f('M3 3h10v10H3z', '#b9ddf4')
};

const dimension = label => {
  if (label === 'red') return f('M3 4h10v8H3z', '#f0a8a8') + p('M1 3v10M15 3v10M2 8h12M4 5h8M4 11h8', red, 1.6) + f('M2 8l4-3v6zM14 8l-4-3v6z', red);
  if (label === 'broom') return dimBase() + f('M6 1h4v4l3 5H3l3-5z', '#a8622e');
  if (label === 'pen') return dimBase() + p('M5 10L13 1', '#755', 3.500) + p('M6 9L13 1', '#ecd', 1.5);
  if (label === 'xo') return p('M1 2l6 7v6M1 6l4-3M1 14h14', '#222', 1.6) + t('0.0', 6, 9, 7);
  const color = ['EH', '15', '151'].includes(label) ? red : '#222';
  const size = label.length > 2 ? 8 : 10;
  const x = label === 'EH' ? 1 : { 2: 3, 3: 2, 4: 1 }[label.length];
  return dimBase() + t(label, x, 8, size, color, serif);
};

const draw = name => `<svg viewBox="0 0 16 16" aria-hidden="true">${name.startsWith('d:') ? dimension(name.slice(2)) : icons[name] || ''}</svg>`;

document.querySelectorAll('[data-icon]').forEach(el => { el.innerHTML = draw(el.dataset.icon); });
document.querySelectorAll('[data-tools]').forEach(el => {
  el.innerHTML = el.dataset.tools.split(' ').map(name => name === '|'
    ? '<i class="sep"></i>'
    : `<button type="button" class="tool${name === 'drop' ? ' tool-drop' : ''}" aria-label="${name}">${draw(name)}</button>`).join('');
});
```
